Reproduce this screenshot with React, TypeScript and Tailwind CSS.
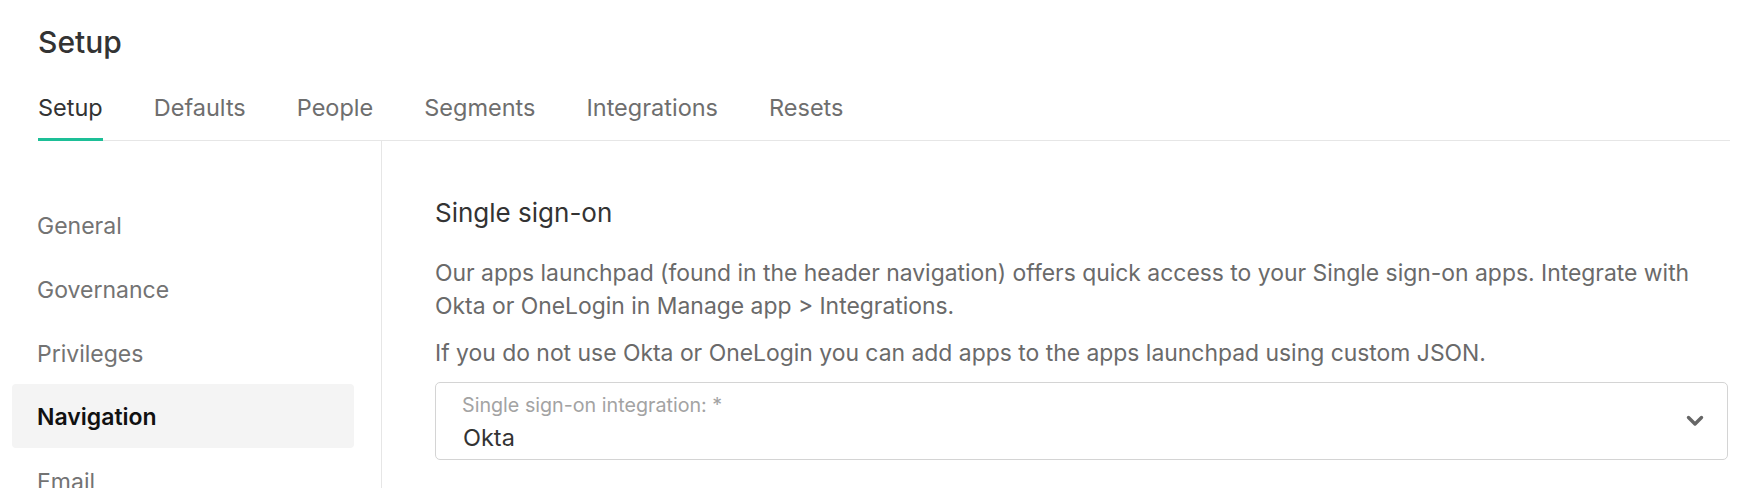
const tabs = ["Setup", "Defaults", "People", "Segments", "Integrations", "Resets"];
const sideItems = ["General", "Governance", "Privileges", "Navigation", "Email"];

export default function App() {
  return (
    <div className="w-full h-[488px] overflow-hidden bg-white flex flex-col" style={{ fontFamily: "Inter, 'Liberation Sans', sans-serif" }}>
      {/* Page title + tabs */}
      <div className="pl-[38px] pr-[30px]">
        <h1 className="pt-[22px] text-[30px] leading-[40px] font-medium text-[#333333]">Setup</h1>
        <div className="mt-[32px] flex gap-[51px] border-b border-[#e6e6e6]">
          {tabs.map((t, i) => (
            <div
              key={t}
              className={
                i === 0
                  ? "-mb-px pb-[16px] border-b-[3px] border-[#1dbf97] text-[23.5px] leading-[28px] text-[#333333]"
                  : "-mb-px pb-[16px] border-b-[3px] border-transparent text-[23.5px] leading-[28px] text-[#6e6e6e]"
              }
            >
              {t}
            </div>
          ))}
        </div>
      </div>

      <div className="flex flex-1 min-h-0">
        {/* Sidebar */}
        <div className="w-[382px] shrink-0 border-r border-[#e6e6e6] pt-[51px] pl-[12px] pr-[27px]">
          {sideItems.map((s) =>
            s === "Navigation" ? (
              <div key={s} className="h-16 flex items-center pl-[25px] pt-[3px] rounded bg-[#f4f4f4] text-[23px] font-semibold text-[#111111]">
                {s}
              </div>
            ) : (
              <div key={s} className="h-16 flex items-center pl-[25px] pt-[4px] text-[23px] text-[#737373]">
                {s}
              </div>
            )
          )}
        </div>

        {/* Content */}
        <div className="flex-1 pl-[53px] pr-[32px] pt-[56px]">
          <h2 className="text-[26px] leading-[32px] text-[#333333]">Single sign-on</h2>
          <p className="mt-[28px] text-[22.9px] leading-[33px] text-[#6a6a6a]">
            Our apps launchpad (found in the header navigation) offers quick access to your Single sign-on apps. Integrate with Okta or OneLogin in Manage app &gt; Integrations.
          </p>
          <p className="mt-[14px] text-[22.9px] leading-[33px] text-[#6a6a6a]">
            If you do not use Okta or OneLogin you can add apps to the apps launchpad using custom JSON.
          </p>
          <div className="mt-[12px] h-[78px] border border-[#d4d4d4] rounded-[5px] pl-[26px] pr-[23px] flex items-center justify-between">
            <div className="self-stretch pt-[11px] flex flex-col">
              <span className="text-[19.7px] leading-[22px] text-[#a3a3a3]">Single sign-on integration: *</span>
              <span className="mt-[8px] ml-[1px] text-[23.5px] leading-[28px] text-[#333333]">Okta</span>
            </div>
            <svg width="18" height="12" viewBox="0 0 18 12" className="text-[#666666]">
              <path d="M2.5 2.5 L9 9 L15.5 2.5" fill="none" stroke="currentColor" strokeWidth="3.4" strokeLinecap="round" strokeLinejoin="round" />
            </svg>
          </div>
        </div>
      </div>
    </div>
  );
}
